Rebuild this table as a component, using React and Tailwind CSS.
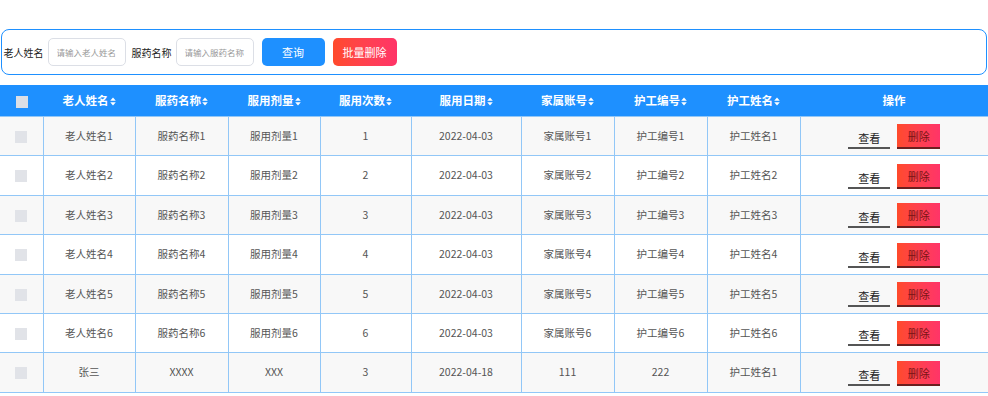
import React from 'react';

const columns = [
    { label: '老人姓名', width: 'w-[92px]' },
    { label: '服药名称', width: 'w-[93px]' },
    { label: '服用剂量', width: 'w-[92px]' },
    { label: '服用次数', width: 'w-[91px]' },
    { label: '服用日期', width: 'w-[110px]' },
    { label: '家属账号', width: 'w-[93px]' },
    { label: '护工编号', width: 'w-[93px]' },
    { label: '护工姓名', width: 'w-[93px]' },
];

const rows = [
    ['老人姓名1', '服药名称1', '服用剂量1', '1', '2022-04-03', '家属账号1', '护工编号1', '护工姓名1'],
    ['老人姓名2', '服药名称2', '服用剂量2', '2', '2022-04-03', '家属账号2', '护工编号2', '护工姓名2'],
    ['老人姓名3', '服药名称3', '服用剂量3', '3', '2022-04-03', '家属账号3', '护工编号3', '护工姓名3'],
    ['老人姓名4', '服药名称4', '服用剂量4', '4', '2022-04-03', '家属账号4', '护工编号4', '护工姓名4'],
    ['老人姓名5', '服药名称5', '服用剂量5', '5', '2022-04-03', '家属账号5', '护工编号5', '护工姓名5'],
    ['老人姓名6', '服药名称6', '服用剂量6', '6', '2022-04-03', '家属账号6', '护工编号6', '护工姓名6'],
    ['张三', 'XXXX', 'XXX', '3', '2022-04-18', '111', '222', '护工姓名1'],
];

// row heights measured from the screenshot
const rowHeights = ['h-[39px]', 'h-[40px]', 'h-[39px]', 'h-[40px]', 'h-[39px]', 'h-[39px]', 'h-[40px]'];

const SortIcon = () => (
    <svg width="6" height="9" viewBox="0 0 6 9" className="inline-block ml-[1px] -mt-[1px] align-middle" fill="#ffffff">
        <path d="M3 0.5 L5.8 3.8 L0.2 3.8 Z" />
        <path d="M3 8.5 L5.8 5.2 L0.2 5.2 Z" />
    </svg>
);

const App = () => {
    return (
        <div
            className="w-[988px] h-[396px] bg-white overflow-hidden pt-[29px]"
            style={{ fontFamily: "'Noto Sans CJK SC', 'Noto Sans', sans-serif" }}
        >
            {/* Search bar */}
            <div className="ml-[1px] w-[986px] h-[46px] border-[1.5px] border-[#1e90ff] rounded-[8px] flex items-center pl-[1.5px]">
                <span className="text-[10px] text-[#222] mr-[4px]">老人姓名</span>
                <input
                    className="w-[78px] h-[28px] border border-[#dcdfe6] rounded-[5px] px-[8px] text-[8.5px] outline-none placeholder:text-[#999]"
                    placeholder="请输入老人姓名"
                />
                <span className="text-[10px] text-[#222] ml-[6px] mr-[4px]">服药名称</span>
                <input
                    className="w-[78px] h-[28px] border border-[#dcdfe6] rounded-[5px] px-[8px] text-[8.5px] outline-none placeholder:text-[#999]"
                    placeholder="请输入服药名称"
                />
                <button className="ml-[8px] w-[63px] h-[28px] rounded-[5px] bg-[#1e90ff] text-white text-[11px]">
                    查询
                </button>
                <button className="ml-[8px] w-[64px] h-[28px] rounded-[5px] bg-gradient-to-r from-[#ff4a2a] to-[#ff3468] text-white text-[11px]">
                    批量删除
                </button>
            </div>

            {/* Table */}
            <table className="mt-[10px] w-[988px] border-collapse table-fixed text-[10.5px]">
                <thead>
                    <tr className="bg-[#1e90ff] h-[31px]">
                        <th className="w-[43px]">
                            <span className="inline-block w-[12px] h-[12px] bg-[#dcdfe6] align-middle" />
                        </th>
                        {columns.map(col => (
                            <th key={col.label} className={`${col.width} text-white text-[11.5px] font-bold`}>
                                {col.label}
                                <SortIcon />
                            </th>
                        ))}
                        <th className="w-[188px] text-white text-[11.5px] font-bold">操作</th>
                    </tr>
                </thead>
                <tbody>
                    {rows.map((row, i) => (
                        <tr key={i} className={`${rowHeights[i]} ${i % 2 === 0 ? 'bg-[#f8f8f8]' : 'bg-white'}`}>
                            <td className="border border-[#92c7f7] border-l-0 text-center">
                                <span className="inline-block w-[12px] h-[12px] bg-[#e1e3e8] align-middle" />
                            </td>
                            {row.map((cell, j) => (
                                <td key={j} className="border border-[#92c7f7] text-center text-[#555]">
                                    {cell}
                                </td>
                            ))}
                            <td className="border border-[#92c7f7] border-r-0 text-center">
                                <div className="flex items-end justify-center gap-[7px] h-[25px] mt-[2px]">
                                    <button className="w-[42px] h-[21px] border-b-2 border-[#555] text-[11px] text-[#222] leading-none pt-[2px]">
                                        查看
                                    </button>
                                    <button className="w-[43px] h-[25px] leading-none pt-[2px] bg-gradient-to-r from-[#ff4a2a] to-[#ff3468] border-b-2 border-[#6b1f1f] text-[11px] text-[#7a1414]">
                                        删除
                                    </button>
                                </div>
                            </td>
                        </tr>
                    ))}
                </tbody>
            </table>
        </div>
    );
};

export default App;
